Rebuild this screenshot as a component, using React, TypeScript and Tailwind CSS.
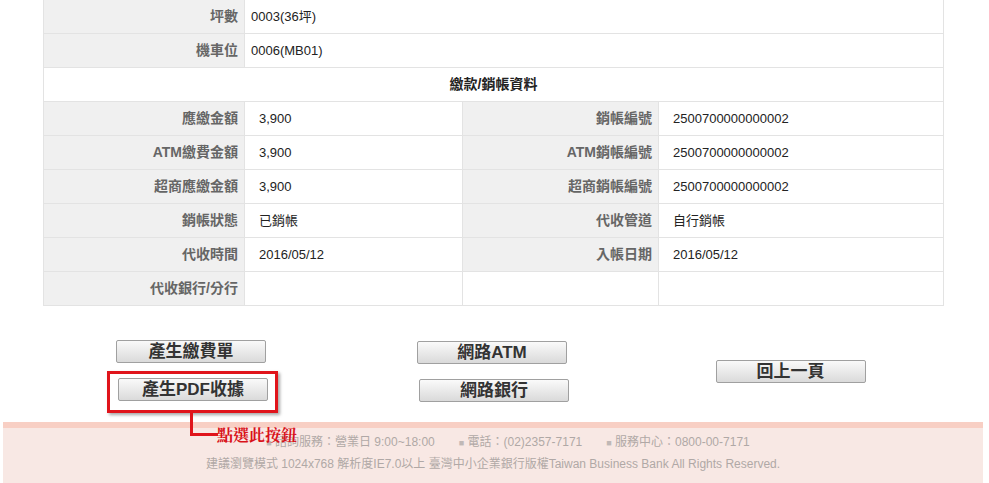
import React from 'react';

const font = {
    fontFamily: '"Liberation Sans", Arial, "Noto Sans CJK TC", sans-serif',
};

function Label({ children }: { children: React.ReactNode }) {
    return (
        <td className="h-[34px] border border-[#e3e3e3] bg-[#f0f0f0] pr-[6px] text-right text-[14px] font-bold text-[#666]">
            {children}
        </td>
    );
}

function Value({
    children,
    pad = 'pl-[14px]',
    span,
}: {
    children?: React.ReactNode;
    pad?: string;
    span?: number;
}) {
    return (
        <td
            colSpan={span}
            className={`h-[34px] border border-[#e3e3e3] bg-white text-[13px] text-[#222] ${pad}`}>
            {children}
        </td>
    );
}

function Btn({ children, className = '' }: { children: React.ReactNode; className?: string }) {
    return (
        <button
            className={`h-[23px] w-[150px] rounded-[2px] border border-[#a0a0a0] bg-gradient-to-b from-[#fafafa] to-[#dadada] text-[17px] leading-[21px] font-bold text-[#333] ${className}`}>
            {children}
        </button>
    );
}

export default function App() {
    return (
        <div className="h-[483px] w-[989px] overflow-hidden bg-white" style={font}>
            {/* Detail table */}
            <table className="-mt-px ml-[43px] w-[900px] table-fixed border-collapse">
                <colgroup>
                    <col className="w-[201px]" />
                    <col className="w-[218px]" />
                    <col className="w-[196px]" />
                    <col className="w-[285px]" />
                </colgroup>
                <tbody>
                    <tr>
                        <Label>坪數</Label>
                        <Value span={3} pad="pl-[6px]">0003(36坪)</Value>
                    </tr>
                    <tr>
                        <Label>機車位</Label>
                        <Value span={3} pad="pl-[6px]">0006(MB01)</Value>
                    </tr>
                    <tr>
                        <td
                            colSpan={4}
                            className="h-[34px] border border-[#e3e3e3] bg-white text-center text-[14px] font-bold text-[#222]">
                            繳款/銷帳資料
                        </td>
                    </tr>
                    <tr>
                        <Label>應繳金額</Label>
                        <Value>3,900</Value>
                        <Label>銷帳編號</Label>
                        <Value>2500700000000002</Value>
                    </tr>
                    <tr>
                        <Label>ATM繳費金額</Label>
                        <Value>3,900</Value>
                        <Label>ATM銷帳編號</Label>
                        <Value>2500700000000002</Value>
                    </tr>
                    <tr>
                        <Label>超商應繳金額</Label>
                        <Value>3,900</Value>
                        <Label>超商銷帳編號</Label>
                        <Value>2500700000000002</Value>
                    </tr>
                    <tr>
                        <Label>銷帳狀態</Label>
                        <Value>已銷帳</Value>
                        <Label>代收管道</Label>
                        <Value>自行銷帳</Value>
                    </tr>
                    <tr>
                        <Label>代收時間</Label>
                        <Value>2016/05/12</Value>
                        <Label>入帳日期</Label>
                        <Value>2016/05/12</Value>
                    </tr>
                    <tr>
                        <Label>代收銀行/分行</Label>
                        <Value />
                        <td className="h-[34px] border border-[#e3e3e3] bg-white" />
                        <Value />
                    </tr>
                </tbody>
            </table>

            {/* Buttons */}
            <div className="mt-[34px] ml-[43px] grid w-[900px] grid-cols-3 items-center">
                <div className="flex flex-col items-center gap-[15px]">
                    <Btn className="-ml-[4px]">產生繳費單</Btn>
                    <div className="relative">
                        <Btn>產生PDF收據</Btn>
                        <div className="pointer-events-none absolute -top-[7px] -left-[11px] h-[42px] w-[171px] border-[3px] border-[#e0141b] shadow-[2px_2px_3px_rgba(0,0,0,0.35)]" />
                    </div>
                </div>
                <div className="flex flex-col items-center gap-[15px]">
                    <Btn className="-ml-[2px]">網路ATM</Btn>
                    <Btn className="ml-[2px]">網路銀行</Btn>
                </div>
                <div className="flex justify-center">
                    <Btn className="-ml-[5px]">回上一頁</Btn>
                </div>
            </div>

            {/* Footer */}
            <div className="relative mx-[3px] mt-[20px] w-[980px] border-t-[6px] border-[#f8cfc4] bg-[#f8e8e4] pt-[4px] pb-[20px] text-center text-[12px] leading-[21px] text-[#b0a8a6]">
                <p className="pl-[30px]">
                    <span className="text-[9px] text-[#c0b8b6]">■</span> 諮詢服務：營業日 9:00~18:00
                    <span className="ml-[24px] text-[9px] text-[#c0b8b6]">■</span> 電話：(02)2357-7171
                    <span className="ml-[24px] text-[9px] text-[#c0b8b6]">■</span> 服務中心：0800-00-7171
                </p>
                <p>建議瀏覽模式 1024x768 解析度IE7.0以上 臺灣中小企業銀行版權Taiwan Business Bank All Rights Reserved.</p>

                {/* Annotation */}
                <div className="absolute -top-[16px] left-[187px] h-[24px] w-[3px] bg-[#e0141b]" />
                <div className="absolute top-[5px] left-[187px] h-[3px] w-[28px] bg-[#e0141b]" />
                <span
                    className="absolute -top-[3px] left-[214px] text-[16px] leading-[20px] font-bold text-[#d9121a]"
                    style={{ fontFamily: '"Noto Serif CJK TC", "Noto Sans CJK TC", serif' }}>
                    點選此按鈕
                </span>
            </div>
        </div>
    );
}
